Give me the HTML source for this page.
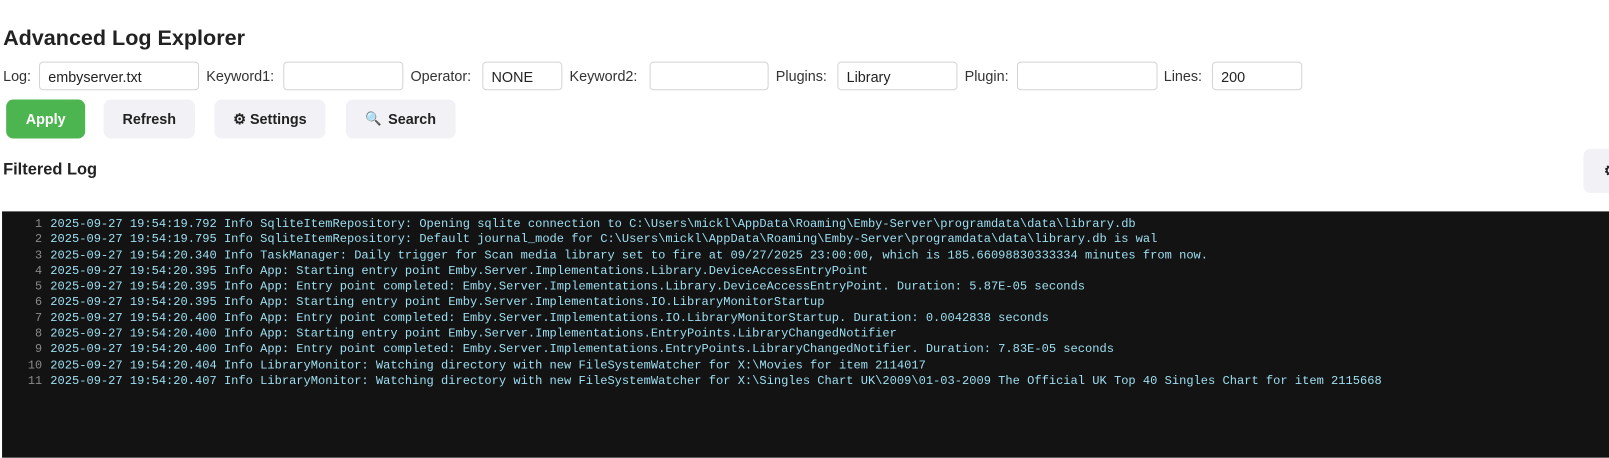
<!DOCTYPE html>
<html><head><meta charset="utf-8"><style>
body{margin:0;width:1609px;height:446px;overflow:hidden;background:#fff;font-family:"Liberation Sans",sans-serif;color:#222;position:relative}
#w{position:absolute;left:0;top:0;width:1568px;height:435px;transform:scale(1.0262);transform-origin:0 0}
.a{position:absolute;white-space:nowrap}
.lbl{font-size:14px;color:#333;top:66px}
.in{position:absolute;top:60px;height:28px;border:1px solid #d4d4d4;border-radius:4px;box-sizing:border-box;font-size:14px;padding:6px 8px;color:#222}
.btn{position:absolute;top:97px;height:38px;border-radius:7px;background:#f2f1f6;font-size:14px;font-weight:bold;display:flex;align-items:center;justify-content:center;color:#222}
.log{position:absolute;left:2px;top:206px;width:1580px;height:240px;background:#131313;font-family:"Liberation Mono",monospace;font-size:11.76px;line-height:15.3px;color:#9edff2;padding-top:5px;box-sizing:border-box}
.log div{white-space:pre}
.n{color:#8a8a8a;display:inline-block;width:39px;text-align:right;margin-right:8px;font-size:11.5px}
</style></head><body><div id="w">
<div class="a" style="left:3px;top:26px;font-size:21px;font-weight:bold;color:#222">Advanced Log Explorer</div>
<div class="a lbl" style="left:3px">Log:</div>
<div class="in" style="left:38px;width:156px">embyserver.txt</div>
<div class="a lbl" style="left:201px">Keyword1:</div>
<div class="in" style="left:276px;width:117px"></div>
<div class="a lbl" style="left:400px">Operator:</div>
<div class="in" style="left:470px;width:78px">NONE</div>
<div class="a lbl" style="left:555px">Keyword2:</div>
<div class="in" style="left:633px;width:116px"></div>
<div class="a lbl" style="left:756px">Plugins:</div>
<div class="in" style="left:816px;width:117px">Library</div>
<div class="a lbl" style="left:940px">Plugin:</div>
<div class="in" style="left:991px;width:137px"></div>
<div class="a lbl" style="left:1134px">Lines:</div>
<div class="in" style="left:1181px;width:88px">200</div>
<div class="btn" style="left:6px;width:77px;background:#4cb54f;color:#fff">Apply</div>
<div class="btn" style="left:101px;width:89px">Refresh</div>
<div class="btn" style="left:209px;width:108px">⚙ Settings</div>
<div class="btn" style="left:337px;width:107px"><span style="font-size:13px;margin-right:6px">🔍</span>Search</div>
<div class="a" style="left:3px;top:157px;font-size:16px;font-weight:bold">Filtered Log</div>
<div class="btn" style="left:1543px;top:145px;width:80px;height:43px;justify-content:flex-start;padding-left:20px;box-sizing:border-box">⚙</div>
<div class="log">
<div><span class="n">1</span>2025-09-27 19:54:19.792 Info SqliteItemRepository: Opening sqlite connection to C:\Users\mickl\AppData\Roaming\Emby-Server\programdata\data\library.db</div>
<div><span class="n">2</span>2025-09-27 19:54:19.795 Info SqliteItemRepository: Default journal_mode for C:\Users\mickl\AppData\Roaming\Emby-Server\programdata\data\library.db is wal</div>
<div><span class="n">3</span>2025-09-27 19:54:20.340 Info TaskManager: Daily trigger for Scan media library set to fire at 09/27/2025 23:00:00, which is 185.66098830333334 minutes from now.</div>
<div><span class="n">4</span>2025-09-27 19:54:20.395 Info App: Starting entry point Emby.Server.Implementations.Library.DeviceAccessEntryPoint</div>
<div><span class="n">5</span>2025-09-27 19:54:20.395 Info App: Entry point completed: Emby.Server.Implementations.Library.DeviceAccessEntryPoint. Duration: 5.87E-05 seconds</div>
<div><span class="n">6</span>2025-09-27 19:54:20.395 Info App: Starting entry point Emby.Server.Implementations.IO.LibraryMonitorStartup</div>
<div><span class="n">7</span>2025-09-27 19:54:20.400 Info App: Entry point completed: Emby.Server.Implementations.IO.LibraryMonitorStartup. Duration: 0.0042838 seconds</div>
<div><span class="n">8</span>2025-09-27 19:54:20.400 Info App: Starting entry point Emby.Server.Implementations.EntryPoints.LibraryChangedNotifier</div>
<div><span class="n">9</span>2025-09-27 19:54:20.400 Info App: Entry point completed: Emby.Server.Implementations.EntryPoints.LibraryChangedNotifier. Duration: 7.83E-05 seconds</div>
<div><span class="n">10</span>2025-09-27 19:54:20.404 Info LibraryMonitor: Watching directory with new FileSystemWatcher for X:\Movies for item 2114017</div>
<div><span class="n">11</span>2025-09-27 19:54:20.407 Info LibraryMonitor: Watching directory with new FileSystemWatcher for X:\Singles Chart UK\2009\01-03-2009 The Official UK Top 40 Singles Chart for item 2115668</div>
</div>
</div></body></html>
